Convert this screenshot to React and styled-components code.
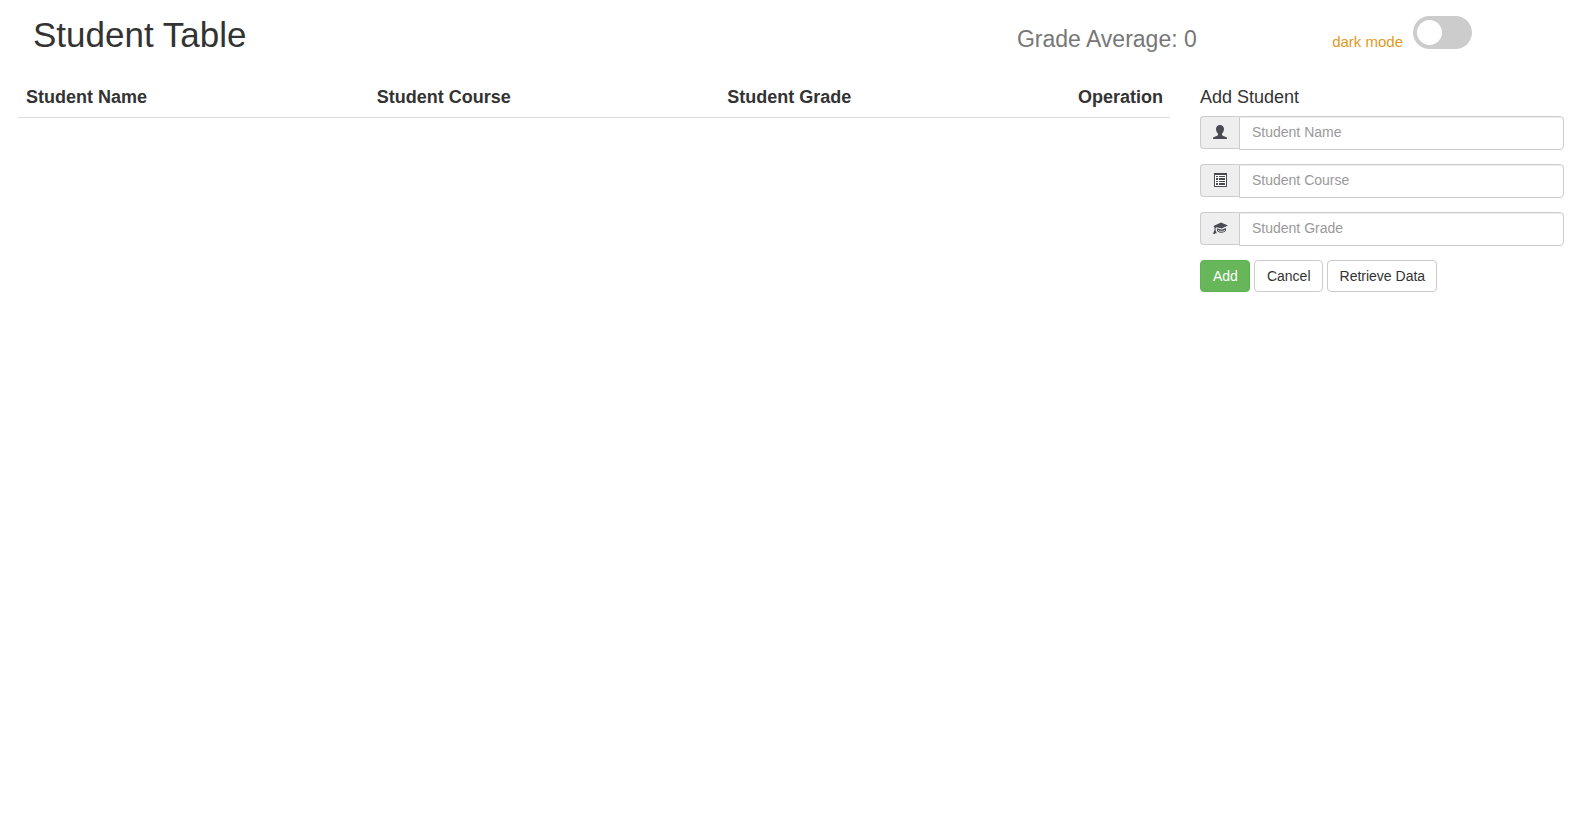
import React, { useState } from "react";
import styled, { createGlobalStyle } from "styled-components";

const GlobalStyle = createGlobalStyle`
  *, *::before, *::after { box-sizing: border-box; }
  body {
    margin: 0;
    padding: 0 3px;
    background: #fff;
    color: #333;
    font: 14px/20px "Liberation Sans", Arial, sans-serif;
  }
  button, input { font: inherit; }
`;

const Header = styled.header`
  display: grid;
  grid-template-columns: minmax(0, 1fr) auto 24%;
  align-items: start;
  height: 82px;
`;

const Title = styled.h1`
  margin: 0;
  padding: 15px 0 0 30px;
  font-size: 35px;
  line-height: 40px;
  font-weight: 400;
`;

const Average = styled.h2`
  margin: 0;
  padding: 24px 4px 0 0;
  font-size: 23px;
  line-height: 30px;
  font-weight: 400;
  color: #777;
`;

const ModeSwitch = styled.label`
  display: flex;
  align-items: flex-start;
  justify-content: flex-end;
  gap: 10px;
  padding: 16px 107px 0 0;
  cursor: pointer;
`;

const ModeText = styled.span`
  padding-top: 16px;
  font-size: 15px;
  color: #e09a1f;
`;

const Toggle = styled.input`
  appearance: none;
  display: flex;
  width: 59px;
  height: 33px;
  margin: 0;
  padding: 4px;
  border-radius: 17px;
  background: #ccc;
  cursor: pointer;

  &::before {
    content: "";
    width: 25px;
    height: 25px;
    border-radius: 50%;
    background: #fff;
  }
  &:checked { justify-content: flex-end; background: #2196f3; }
`;

const Content = styled.main`
  display: grid;
  grid-template-columns: 3fr 1fr;
`;

const TablePane = styled.section`
  padding: 0 15px;
`;

const Table = styled.table`
  width: 100%;
  table-layout: fixed;
  border-collapse: collapse;
`;

const HeadCell = styled.th`
  width: ${(p) => (p.$narrow ? "100px" : "auto")};
  padding: 5px 8px 10px;
  border-bottom: 1px solid #ddd;
  text-align: left;
  font-size: 18px;
  line-height: 20px;
`;

const FormPane = styled.form`
  padding: 5px 15px 0;
`;

const FormTitle = styled.h3`
  margin: 0 0 9px;
  font-size: 18px;
  line-height: 20px;
  font-weight: 400;
`;

const Field = styled.div`
  display: flex;
  align-items: flex-start;
  margin-bottom: 14px;
`;

const FieldIcon = styled.label`
  display: flex;
  align-items: center;
  justify-content: center;
  width: 39px;
  height: 33px;
  border: 1px solid #ccc;
  border-right: 0;
  border-radius: 4px 0 0 4px;
  background: #eee;
  color: #4a4a52;
`;

const TextInput = styled.input`
  flex: 1;
  min-width: 0;
  height: 34px;
  padding: 5px 12px 7px;
  border: 1px solid #ccc;
  border-radius: 0 4px 4px 0;
  background: #fff;
  box-shadow: inset 0 1px 1px rgba(0, 0, 0, 0.075);
  color: #555;
  &::placeholder { color: #999; opacity: 1; }
`;

const Actions = styled.div`
  display: flex;
  gap: 4px;
`;

const Button = styled.button`
  height: 32px;
  padding: 0 11px 0 12px;
  border: 1px solid ${(p) => (p.$primary ? "#5fb053" : "#ccc")};
  border-radius: 4px;
  background: ${(p) => (p.$primary ? "#67b659" : "#fff")};
  color: ${(p) => (p.$primary ? "#fff" : "#333")};
  cursor: pointer;
`;

const Glyph = ({ children }) => (
  <svg width="16" height="15" viewBox="0 0 16 15" fill="currentColor" aria-hidden="true">
    {children}
  </svg>
);

const icons = {
  name: (
    <Glyph>
      <path d="M8 0C5.500 0 4 1.700 4 4c0 1.900.8 3.500 2 4.600v1.200c0 .5-.3.800-.8 1L2 12c-.7.300-1 .700-1 1.300V14h14v-.7c0-.6-.3-1-1-1.300l-3.200-1.200c-.5-.2-.8-.5-.8-1V8.600c1.200-1.100 2-2.700 2-4.600C12 1.700 10.500 0 8 0z" />
    </Glyph>
  ),
  course: (
    <Glyph>
      <path d="M2 0h13v14H2z" />
      <path fill="#fff" d="M3 2h11v11H3z" />
      <path d="M4 3h2v1H4zM7 3h6v1H7zM4 5h2v2H4zM7 5h6v2H7zM4 8h2v1H4zM7 8h6v1H7zM4 10h2v2H4zM7 10h6v2H7z" />
    </Glyph>
  ),
  grade: (
    <Glyph>
      <path d="M9 1.500 16 4.500 9.500 7.500 5 6.200 3.500 7v2l1.300 3.500-1.300-.6-.8 1.300-1.700-.6L2.500 9V6.500L1.500 5z" />
      <path d="M5 7.300 9.500 8.800 14 7v2.500c-1.200 1.500-2.600 2.200-4.500 2.200S6.200 11.200 5 9.700z" />
      <path d="M6 9c1 1 2 1.400 3.500 1.400S12 10 13 9" fill="none" stroke="#eee" />
    </Glyph>
  ),
};

const fields = [
  { id: "name", label: "Student Name" },
  { id: "course", label: "Student Course" },
  { id: "grade", label: "Student Grade" },
];

export default function App() {
  const [values, setValues] = useState({ name: "", course: "", grade: "" });
  const clear = () => setValues({ name: "", course: "", grade: "" });

  return (
    <>
      <GlobalStyle />
      <Header>
        <Title>Student Table</Title>
        <Average>Grade Average: 0</Average>
        <ModeSwitch>
          <ModeText>dark mode</ModeText>
          <Toggle type="checkbox" role="switch" />
        </ModeSwitch>
      </Header>
      <Content>
        <TablePane>
          <Table>
            <thead>
              <tr>
                {fields.map((f) => (
                  <HeadCell key={f.id} scope="col">{f.label}</HeadCell>
                ))}
                <HeadCell scope="col" $narrow>Operation</HeadCell>
              </tr>
            </thead>
            <tbody />
          </Table>
        </TablePane>
        <FormPane onSubmit={(e) => e.preventDefault()}>
          <FormTitle>Add Student</FormTitle>
          {fields.map((f) => (
            <Field key={f.id}>
              <FieldIcon htmlFor={f.id} aria-label={f.label}>{icons[f.id]}</FieldIcon>
              <TextInput
                id={f.id}
                placeholder={f.label}
                value={values[f.id]}
                onChange={(e) => setValues({ ...values, [f.id]: e.target.value })}
              />
            </Field>
          ))}
          <Actions>
            <Button type="submit" $primary>Add</Button>
            <Button type="button" onClick={clear}>Cancel</Button>
            <Button type="button">Retrieve Data</Button>
          </Actions>
        </FormPane>
      </Content>
    </>
  );
}
